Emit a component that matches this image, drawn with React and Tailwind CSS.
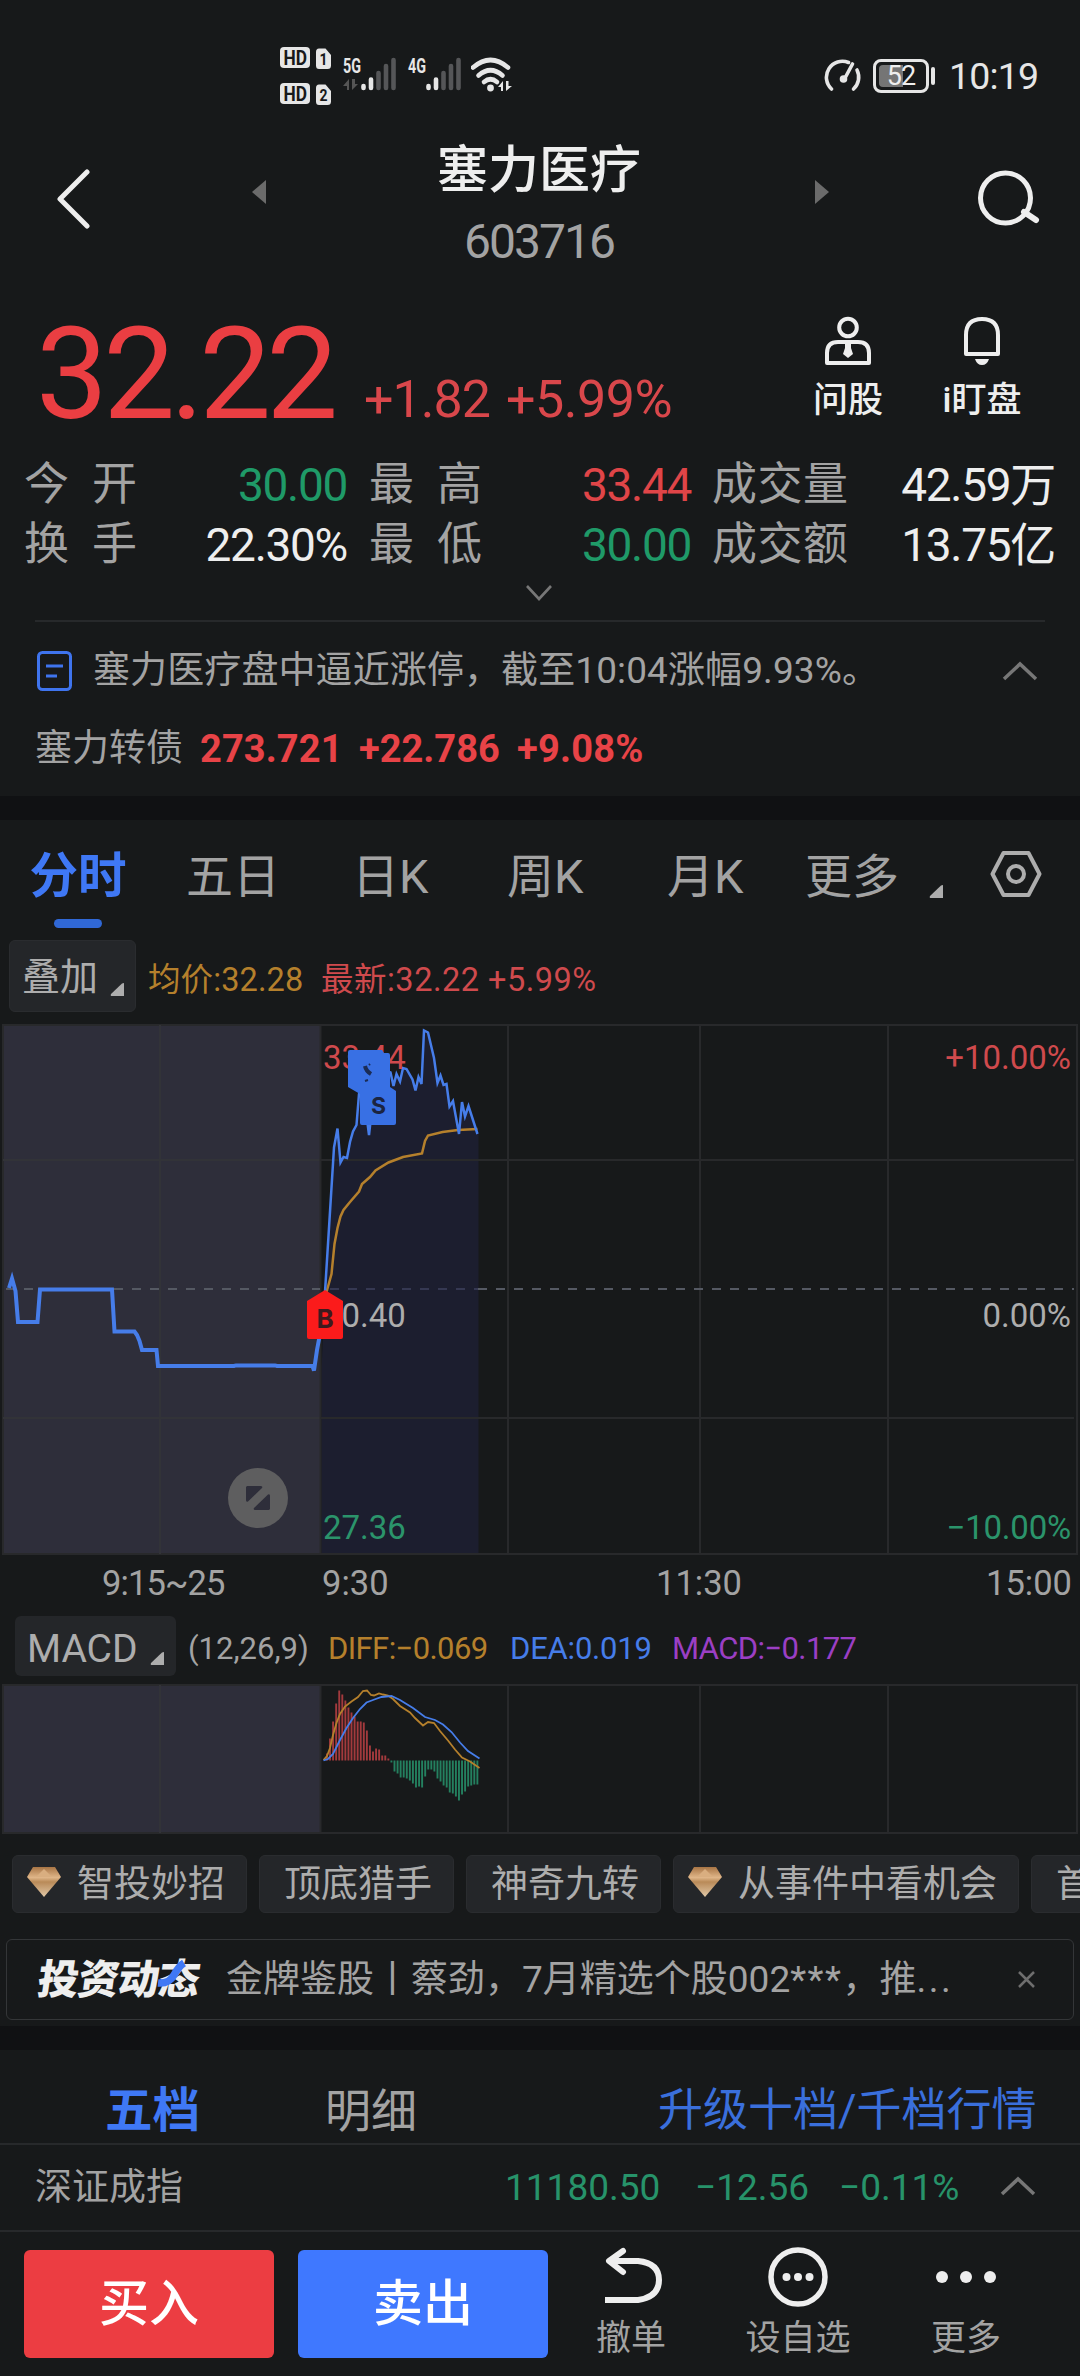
import React from "react";

const quoteRows = [
  [
    { label: ["今", "开"], value: "30.00", color: "text-[#1f9a68]" },
    { label: ["最", "高"], value: "33.44", color: "text-[#e04548]" },
    { label: ["成", "交", "量"], value: "42.59万", color: "text-[#eeeeee]" },
  ],
  [
    { label: ["换", "手"], value: "22.30%", color: "text-[#eeeeee]" },
    { label: ["最", "低"], value: "30.00", color: "text-[#1f9a68]" },
    { label: ["成", "交", "额"], value: "13.75亿", color: "text-[#eeeeee]" },
  ],
];

const quoteCols = [
  { box: "ml-[24px] w-[323px]", label: "w-[113px]" },
  { box: "ml-[22px] w-[322px]", label: "w-[113px]" },
  { box: "ml-[21px] w-[343px]", label: "w-[136px]" },
];

const periods = [
  { name: "五日", width: "ml-[59px] w-[94px]" },
  { name: "日K", width: "ml-[72px] w-[80px]" },
  { name: "周K", width: "ml-[75px] w-[80px]" },
  { name: "月K", width: "ml-[80px] w-[80px]" },
  { name: "更多", width: "ml-[58px] w-[94px]" },
];

const strategies = [
  { name: "智投妙招", width: "w-[235px]", gem: true },
  { name: "顶底猎手", width: "w-[195px]" },
  { name: "神奇九转", width: "w-[195px]" },
  { name: "从事件中看机会", width: "w-[346px]", gem: true },
  { name: "首板", width: "w-[195px]" },
];

// call auction, 9:15 - 9:25
const auctionLine =
  "9,264 12,254.5 15.5,267 18,298 37.5,298 40,265.5 112,265.5 114.5,307.5 134.5,307.5 137,311 139.5,317 142,326 156.5,326 158,342 234,342 236,341.4 275,341.4 277,342 312.5,342 314,346.5 317,326 320,310";

const priceLine =
  "325,268 334,123.5 337.5,104.5 340.5,138.5 343.5,133 347,134 350,118 353,107.5 356.5,101 359,70 363,60 366,87 369,111 371,93 378,60 386,47 390.5,48.5 393.5,62 396.5,50 400,57.5 403,44 406.5,45 412.5,55.5 415.5,66.5 418.5,53 421.5,60 424,6.5 428,8.5 434,34 437.5,59 440.5,51.5 443.5,61 446.5,60 449.5,82.5 453,77 459,110 462,78 465,92.5 468.5,82 477.5,110";

const averageLine =
  "326.5,268 331.5,250 334.5,220 337.5,204 340.5,192.5 343.5,186 350,178 359,167.5 362,160 370,153 375.5,146.5 388.5,138.5 403,133 422,129.5 425,117 428,111.5 442.5,108 458,106 477.5,105";

const macdBars = [
  7, 22, 39, 57, 70, 66, 60, 53, 48, 44, 39, 39, 38, 30, 15, 9, 12, 11, 5, 5, 2,
  -2, -11, -13, -17, -17, -18, -20, -23, -27, -26, -27, -16, -9, -9, -11, -18,
  -21, -25, -27, -32, -33, -36, -40, -34, -31, -26, -25, -24, -24,
];

const HdBadge = ({ sim }) => (
  <svg className="overflow-visible" width="52" height="23" viewBox="0 0 52 23" fontFamily="Roboto" fontWeight="700" fill="#17191a">
    <rect x="0" y="0" width="30" height="21" rx="4" fill="#e6e6e6" />
    <text x="3.5" y="17.5" fontSize="20" textLength="23.5" lengthAdjust="spacingAndGlyphs">HD</text>
    <path d="M39 1.5H45.5L51 8V18.5Q51 22 47.5 22H39Q36 22 36 18.5V5Q36 1.5 39 1.5Z" fill="#e6e6e6" />
    <text x="39.5" y="18" fontSize="17" textLength="8" lengthAdjust="spacingAndGlyphs">{sim}</text>
  </svg>
);

const Signal = ({ label, arrows }) => (
  <svg className="overflow-visible" width="54" height="35" viewBox="0 0 54 35">
    <text x="0" y="15.5" fontFamily="Roboto" fontWeight="700" fontSize="20" fill="#e6e6e6" textLength="18" lengthAdjust="spacingAndGlyphs">{label}</text>
    {arrows && (
      <path d="M6 22V33H4V29H0ZM9 22V33L15 27H12V22Z" fill="#555" />
    )}
    <g strokeWidth="4.6" strokeLinecap="round">
      <path d="M20.5 29V31M28 22.5V31" stroke="#e6e6e6" />
      <path d="M35.5 16V31M43 9V31M50.5 3V31" stroke="#555658" />
    </g>
  </svg>
);

const Corner = ({ className }) => (
  <svg className={className} width="14" height="13" viewBox="0 0 14 13">
    <path d="M14 0V13H2Q0 13 1 11L12 .6Z" fill="#adadad" />
  </svg>
);

const Gem = () => (
  <svg className="mr-[16px] mt-[-4px]" width="34" height="32" viewBox="0 0 34 32">
    <defs>
      <linearGradient id="gem" x1="0" y1="0" x2="0" y2="1">
        <stop offset="0" stopColor="#a87545" />
        <stop offset=".35" stopColor="#dfb588" />
        <stop offset=".5" stopColor="#b98a58" />
        <stop offset="1" stopColor="#e2c9a8" />
      </linearGradient>
    </defs>
    <path d="M6 1H28L34 11L17 31L0 11Z" fill="url(#gem)" />
    <path d="M9 11L17 3L25 11Z" fill="#d9ae80" />
  </svg>
);

const ChevronUp = ({ className }) => (
  <svg className={className} width="36" height="20" viewBox="0 0 36 20" fill="none">
    <path d="M2 18L18 3L34 18" stroke="#777" strokeWidth="3.5" />
  </svg>
);

const StatusBar = () => (
  <div className="flex h-[130px] items-start pl-[280px] pt-[47px]">
    <div className="flex flex-col gap-[13px]">
      <HdBadge sim="1" />
      <HdBadge sim="2" />
    </div>
    <div className="ml-[11px] mt-[10px] flex">
      <Signal label="5G" arrows />
      <div className="ml-[11px]"><Signal label="4G" /></div>
      <svg className="ml-[9px]" width="42" height="36" viewBox="0 0 42 36" fill="none" stroke="#e6e6e6" strokeWidth="4.6">
        <path d="M2 10.500Q19.500 -4.500 37 10.500" strokeLinecap="round" />
        <path d="M7.500 18.500Q19.500 8 31.500 18.500" strokeLinecap="round" />
        <path d="M13 25Q19.500 19.500 26 25" strokeLinecap="round" />
        <circle cx="19.5" cy="31" r="3.4" fill="#e6e6e6" stroke="none" />
        <path d="M32 24V34H30V30H27ZM35 24V34L41 29H37.5V24Z" fill="#e6e6e6" stroke="none" />
      </svg>
    </div>
    <svg className="ml-[311px] mt-[12px]" width="38" height="34" viewBox="0 0 38 34" fill="none" stroke="#e6e6e6" strokeWidth="3.6" strokeLinecap="round">
      <path d="M7.5 30A16 16 0 0 1 24.5 3.5" />
      <path d="M33 11A16 16 0 0 1 29.5 30" />
      <path d="M28.500 5L21 19" />
      <circle cx="19.5" cy="20" r="2" fill="#e6e6e6" />
    </svg>
    <div className="ml-[11px] mt-[12px] flex items-center">
      <div className="flex h-[34px] w-[56px] items-center justify-center rounded-[8px] border-[3px] border-[#e6e6e6] bg-[#17191a] p-[3px]">
        <div className="flex h-full w-full items-center justify-center rounded-[4px] bg-linear-to-r from-[#757575] from-55% to-[#17191a] to-55%">
          <span className="text-[27px] leading-none tracking-[-1px] text-[#eeeeee]">52</span>
        </div>
      </div>
      <div className="ml-[2px] h-[18px] w-[4px] rounded-full bg-[#e6e6e6]" />
    </div>
    <span className="ml-[14px] mt-[10px] text-[37.5px] leading-[38px] tracking-[-0.8px] text-[#e6e6e6]">10:19</span>
  </div>
);

const Header = () => (
  <div className="flex h-[150px] items-start pl-[55px]">
    <svg className="mt-[39px]" width="36" height="60" viewBox="0 0 36 60" fill="none">
      <path d="M32 3L5 30L32 57" stroke="#eeeeee" strokeWidth="5" strokeLinecap="round" strokeLinejoin="round" />
    </svg>
    <svg className="ml-[161px] mt-[50px]" width="14" height="24" viewBox="0 0 14 24">
      <path d="M14 0V24L0 12Z" fill="#6b6b6b" />
    </svg>
    <div className="flex w-[549px] flex-col items-center pt-[9px] pr-[3px]">
      <span className="text-[51px] font-medium leading-[64px] text-[#eeeeee]">塞力医疗</span>
      <span className="mt-[15px] text-[48px] leading-[48px] tracking-[-2px] text-[#a3a3a3]">603716</span>
    </div>
    <svg className="mt-[50px]" width="14" height="24" viewBox="0 0 14 24">
      <path d="M0 0V24L14 12Z" fill="#6b6b6b" />
    </svg>
    <svg className="ml-[147px] mt-[39px]" width="66" height="60" viewBox="0 0 66 60" fill="none" stroke="#eeeeee" strokeWidth="5">
      <circle cx="29.5" cy="29" r="25" />
      <path d="M48 43L60 51" strokeLinecap="round" strokeWidth="6" />
    </svg>
  </div>
);

const PricePanel = () => (
  <div className="flex h-[174px] items-start pl-[36px]">
    <span className="mt-[30px] w-[328px] whitespace-nowrap text-[128px] leading-[128px] tracking-[-4.8px] text-[#ea3e42]">32.22</span>
    <span className="mt-[94px] w-[142px] whitespace-nowrap text-[52px] leading-[52px] tracking-[-1px] text-[#d9474b]">+1.82</span>
    <span className="mt-[94px] w-[175px] whitespace-nowrap text-[52px] leading-[52px] tracking-[-0.5px] text-[#d9474b]">+5.99%</span>
    <div className="ml-[100px] mt-[36px] flex w-[134px] flex-col items-center">
      <svg width="48" height="50" viewBox="0 0 48 50" fill="none" stroke="#eeeeee" strokeWidth="4">
        <circle cx="24" cy="11.5" r="8.8" />
        <path d="M3 47V37Q3 26 14 26H34Q45 26 45 37V47Z" strokeLinejoin="round" />
        <path d="M21 28H27V32L29 38L24 42L19 38L21 32Z" fill="#eeeeee" stroke="none" />
      </svg>
      <span className="mt-[15px] text-[35px] font-medium leading-[40px] text-[#eeeeee]">问股</span>
    </div>
    <div className="mt-[36px] flex w-[134px] flex-col items-center">
      <svg width="40" height="50" viewBox="0 0 40 50" fill="none" stroke="#eeeeee" strokeWidth="4">
        <path d="M4 38V19Q4 3 20 3T36 19V38Z" strokeLinejoin="round" />
        <path d="M13 43H27Q25 49 20 49T13 43Z" fill="#eeeeee" stroke="none" />
      </svg>
      <span className="mt-[15px] text-[35px] font-medium leading-[40px] text-[#eeeeee]">i盯盘</span>
    </div>
  </div>
);

const QuoteTable = () => (
  <div className="h-[166px] pt-[1px]">
    {quoteRows.map((row, i) => (
      <div key={i} className="flex h-[60px] items-center">
        {row.map((cell, j) => (
          <div key={cell.label.join("")} className={`flex items-center justify-between ${quoteCols[j].box}`}>
            <div className={`flex justify-between text-[45px] leading-[60px] text-[#a3a3a3] ${quoteCols[j].label}`}>
              {cell.label.map((ch) => (
                <span key={ch}>{ch}</span>
              ))}
            </div>
            <span className={`text-[46px] leading-[60px] tracking-[-1.3px] ${cell.color}`}>{cell.value}</span>
          </div>
        ))}
      </div>
    ))}
    <svg className="ml-[525px] mt-[9px]" width="28" height="18" viewBox="0 0 28 18" fill="none">
      <path d="M2 2L14 15L26 2" stroke="#777" strokeWidth="2.6" />
    </svg>
  </div>
);

const NewsPanel = () => (
  <div className="h-[176px]">
    <div className="mx-[35px] h-[2px] bg-[#27292b]" />
    <div className="flex h-[98px] items-center pl-[37px]">
      <svg width="35" height="40" viewBox="0 0 35 40" fill="none" stroke="#3f74ee" strokeWidth="3">
        <rect x="1.5" y="1.5" width="32" height="37" rx="4" />
        <path d="M9 15H26M9 25H20" />
      </svg>
      <span className="ml-[21px] w-[909px] text-[37px] leading-[48px] tracking-[0.1px] text-[#a3a3a3]">塞力医疗盘中逼近涨停，截至10:04涨幅9.93%。</span>
      <ChevronUp />
    </div>
    <div className="flex h-[58px] items-center pl-[35px] text-[37px] leading-[48px]">
      <span className="w-[165px] text-[#a3a3a3]">塞力转债</span>
      <span className="w-[159px] text-[38px] font-bold tracking-[0.1px] text-[#e84347]">273.721</span>
      <span className="w-[158px] text-[38px] font-bold text-[#e84347]">+22.786</span>
      <span className="text-[38px] font-bold tracking-[0.2px] text-[#e84347]">+9.08%</span>
    </div>
  </div>
);

const PeriodTabs = () => (
  <div className="flex h-[116px] items-start pl-[29px] pt-[23px] text-[47px] leading-[68px] text-[#a3a3a3]">
    <div className="flex w-[98px] flex-col items-center">
      <span className="text-[48.5px] font-bold text-[#3f78f5]">分时</span>
      <div className="mt-[8px] h-[9px] w-[48px] rounded-full bg-[#3068d6]" />
    </div>
    {periods.map((p) => (
      <span key={p.name} className={`whitespace-nowrap ${p.width}`}>{p.name}</span>
    ))}
    <Corner className="ml-[30px] mt-[42px]" />
    <svg className="ml-[47px] mt-[7px]" width="52" height="48" viewBox="0 0 52 48" fill="none" stroke="#adadad" strokeWidth="4">
      <path d="M13.500 3H38.500L49.500 24L38.500 45H13.500L2.500 24Z" strokeLinejoin="round" />
      <circle cx="26" cy="24" r="8" />
    </svg>
  </div>
);

const TimeChart = () => (
  <div className="relative h-[531px]">
    <svg className="block" width="1080" height="531" viewBox="0 0 1080 531" fill="none">
      <rect x="3" y="1" width="317" height="529" fill="#2e2e3a" />
      <polygon points={`325,268 ${priceLine} 478.5,110 478.5,530 321.5,530 321.5,345`} fill="#1c1e2f" />
      <g stroke="#28292b" strokeWidth="2">
        <path d="M3 1H1077V530H3Z" />
        <path d="M320.5 136H1074M320.5 394H1074M508 1V530M700 1V530M888 1V530" />
        <path d="M3 136H320M3 394H320M160 1V530" stroke="#323338" />
        <path d="M320.5 1V530" />
      </g>
      <path d="M6 265H320M478 265H1074" stroke="#555963" strokeWidth="2" strokeDasharray="9 9" />
      <path d="M330 265H478" stroke="#353852" strokeWidth="2" strokeDasharray="9 9" />
      <polyline points={auctionLine} stroke="#467de9" strokeWidth="4" />
      <polyline points={averageLine} stroke="#b5802c" strokeWidth="2.5" />
      <polyline points={priceLine} stroke="#467de9" strokeWidth="2.5" />
    </svg>
    <div className="absolute left-[323px] top-[17px] text-[33px] leading-[33px] text-[#cf4a4d]">33.44</div>
    <div className="absolute left-[323px] top-[275px] text-[33px] leading-[33px] text-[#adadad]">30.40</div>
    <div className="absolute left-[323px] top-[487px] text-[33px] leading-[33px] text-[#2b946b]">27.36</div>
    <div className="absolute right-[9px] top-[17px] text-[33px] leading-[33px] text-[#cf4a4d]">+10.00%</div>
    <div className="absolute right-[9px] top-[275px] text-[33px] leading-[33px] text-[#adadad]">0.00%</div>
    <div className="absolute right-[9px] top-[487px] text-[33px] leading-[33px] tracking-[-0.2px] text-[#2b946b]">−10.00%</div>
    {/* trade markers */}
    <svg className="absolute left-[300px] top-[20px]" width="100" height="300" viewBox="0 0 100 300" fontFamily="Inter" fontWeight="700" textAnchor="middle">
      <path d="M50 6H82L84 9H88Q90 9 90 11V43L96 47V79Q96 81 94 81H62Q60 81 60 79V50L48 43V8Q48 6 50 6Z" fill="#3870e4" />
      <path d="M65 22Q66 27 71 30" stroke="#1b2c55" strokeWidth="4" fill="none" />
      <path d="M69 21L70 20M65 37L68 36" stroke="#1b2c55" strokeWidth="2" fill="none" />
      <text x="78.5" y="70" fontSize="23" fill="#1b2440">S</text>
      <path d="M25 246L43 257V293Q43 295 41 295H9Q7 295 7 293V257Z" fill="#fb1b1b" />
      <text x="25" y="284" fontSize="26" fill="#3d1a1e">B</text>
    </svg>
    <svg className="absolute left-[228px] top-[444px]" width="60" height="60" viewBox="0 0 60 60">
      <circle cx="30" cy="30" r="30" fill="#5e5e5f" />
      <path d="M19 18H33Q35 18.5 34 20L20 33.5Q18 34.5 18 32V19Z" fill="#2e2e3a" />
      <path d="M41 42H27Q25 41.5 26 40L40 26.5Q42 25.5 42 28V41Z" fill="#2e2e3a" />
    </svg>
  </div>
);

const MacdChart = () => (
  <svg className="block" width="1080" height="150" viewBox="0 0 1080 150" fill="none">
    <rect x="3" y="1" width="317" height="147" fill="#2e2e3a" />
    <g stroke="#28292b" strokeWidth="2">
      <path d="M3 1H1077V149H3Z" />
      <path d="M320.5 1V149M508 1V149M700 1V149M888 1V149" />
      <path d="M160 1V149" stroke="#323338" />
    </g>
    {macdBars.map((v, i) => (
      <rect
        key={i}
        x={326 + i * 3.07}
        y={v > 0 ? 76.5 - v : 76.5}
        width="1.9"
        height={Math.abs(v)}
        fill={v > 0 ? "#a33a3d" : "#24805f"}
      />
    ))}
    <polyline
      points="323.5,76 327,72 330,64 333,51 336.5,39 340,30 345,22.5 351.5,17.5 358,13 363,7 367,6.5 371,11 374,11.5 379,9.5 383,10.5 388,11.5 393,15 400,22 410,28.5 415,34 423,41.5 428,38 434,39 440,47 448,56.5 455,65.5 462,73.5 470,77.5 479.5,84"
      stroke="#b5802c"
      strokeWidth="1.8"
    />
    <polyline
      points="323.5,76.5 328,75 333,70 340,56 346.5,44 353,34 360,25 366.5,18.5 373,16 381.5,13 391.5,12 400,16 413,24 425,33 435,36 443,40.5 451.5,48 460,58.5 468,67 479.5,74.5"
      stroke="#467de9"
      strokeWidth="1.8"
    />
  </svg>
);

const ChartPanel = () => (
  <div className="h-[898px]">
    <div className="flex h-[88px] items-start pl-[9px] pt-[4px]">
      <div className="flex h-[72px] w-[127px] items-center rounded-[6px] border border-[#2a2c2f] bg-[#242629] pl-[12px] text-[38px] leading-[56px] text-[#adadad]">
        <span className="mt-[2px]">叠加</span>
        <Corner className="ml-[12px] mt-[26px]" />
      </div>
      <span className="ml-[12px] mt-[18px] w-[173px] whitespace-nowrap text-[32.5px] leading-[44px] tracking-[0.1px] text-[#b5802c]">均价:32.28</span>
      <span className="mt-[18px] whitespace-nowrap text-[32.5px] leading-[44px] tracking-[0.5px] text-[#cf4a4d]">最新:32.22 +5.99%</span>
    </div>
    <TimeChart />
    <div className="flex h-[61px] items-start pt-[10px] text-[34.5px] leading-[36px] text-[#a3a3a3]">
      <span className="ml-[102px] w-[220px] tracking-[-0.9px]">9:15~25</span>
      <span className="w-[334px]">9:30</span>
      <span className="w-[330px]">11:30</span>
      <span>15:00</span>
    </div>
    <div className="flex h-[68px] items-start pl-[15px] text-[31px] leading-[66px]">
      <div className="flex h-[60px] w-[161px] items-center rounded-[6px] bg-[#242629] pl-[12px] text-[39px] text-[#adadad]">
        <span className="mt-[5px]">MACD</span>
        <Corner className="ml-auto mr-[12px] mt-[24px]" />
      </div>
      <span className="ml-[12px] w-[140px] text-[#a3a3a3]">(12,26,9)</span>
      <span className="w-[182px] tracking-[-0.6px] text-[#b5802c]">DIFF:−0.069</span>
      <span className="w-[162px] tracking-[-0.2px] text-[#467de9]">DEA:0.019</span>
      <span className="tracking-[-0.6px] text-[#9b3fc4]">MACD:−0.177</span>
    </div>
    <MacdChart />
  </div>
);

const StrategyChips = () => (
  <div className="flex h-[105px] gap-[12px] overflow-hidden pl-[12px] pt-[21px]">
    {strategies.map((s) => (
      <div
        key={s.name}
        className={`flex h-[58px] shrink-0 items-center rounded-[6px] border border-[#2a2c2f] bg-[#242629] ${s.gem ? "pl-[14px]" : "pl-[24px]"} ${s.width}`}
      >
        {s.gem && <Gem />}
        <span className="mt-[2px] whitespace-nowrap text-[37px] leading-[56px] text-[#adadad]">{s.name}</span>
      </div>
    ))}
  </div>
);

const Banner = () => (
  <div className="mx-[6px] mb-[6px] flex h-[81px] items-center rounded-[6px] border-[1.5px] border-[#343638] pl-[31px]">
    <div className="relative w-[188px]">
      <span className="block skew-x-[-8deg] whitespace-nowrap text-[41px] font-black leading-[60px] tracking-[-0.8px] text-[#eeeeee]">投资动态</span>
      <svg className="absolute left-[118px] top-[10px]" width="36" height="30" viewBox="0 0 36 30" fill="none">
        <path d="M2 23Q13 24 18 15T28 3" stroke="#3f78f5" strokeWidth="7.5" />
      </svg>
    </div>
    <span className="w-[792px] whitespace-nowrap text-[37px] leading-[56px] text-[#a3a3a3]">
      金牌鉴股丨蔡劲，7月精选个股002<span className="tracking-[1.5px]">***</span>，推<span className="tracking-[2.5px]">...</span>
    </span>
    <svg width="17" height="17" viewBox="0 0 17 17" fill="none">
      <path d="M1 1L16 16M16 1L1 16" stroke="#6e6e6e" strokeWidth="2.5" />
    </svg>
  </div>
);

const OrderBookTabs = () => (
  <div className="flex h-[95px] items-start border-b-2 border-[#27292b] pl-[105px] pt-[27px] text-[46px] leading-[68px]">
    <span className="w-[220px] text-[47.5px] font-bold text-[#3f78f5]">五档</span>
    <span className="w-[333px] text-[#a3a3a3]">明细</span>
    <span className="whitespace-nowrap text-[45px] text-[#3a6fdc]">升级十档/千档行情</span>
  </div>
);

const IndexRow = () => (
  <div className="flex h-[87px] items-center border-b-2 border-[#27292b] pl-[35px] pt-[1px] text-[37px] leading-[56px]">
    <span className="w-[470px] text-[#a3a3a3]">深证成指</span>
    <span className="w-[190px] text-[#27936a]">11180.50</span>
    <span className="w-[144px] text-[#27936a]">−12.56</span>
    <span className="w-[161px] text-[#27936a]">−0.11%</span>
    <ChevronUp className="mt-[-4px]" />
  </div>
);

const ActionBar = () => (
  <div className="flex h-[144px] items-start pl-[24px]">
    <button className="mt-[18px] h-[108px] w-[250px] rounded-[6px] bg-[#ec3d42] text-[50px] font-medium leading-[60px] text-white">买入</button>
    <button className="ml-[24px] mt-[18px] h-[108px] w-[250px] rounded-[6px] bg-[#3f78ff] text-[50px] font-medium leading-[60px] text-white">卖出</button>
    <div className="flex text-[35px] leading-[44px] text-[#a3a3a3]">
      <div className="ml-[13px] flex w-[140px] flex-col items-center pt-[14px]">
        <svg className="ml-[4px]" width="62" height="62" viewBox="0 0 62 62" fill="none" stroke="#eeeeee" strokeWidth="6">
          <path d="M6 15H36Q57 17 57 34T36 54H3" />
          <path d="M21 5L7 15L21 26" strokeLinecap="round" strokeLinejoin="round" />
        </svg>
        <span className="mt-[9px]">撤单</span>
      </div>
      <div className="ml-[27px] flex w-[140px] flex-col items-center pt-[14px]">
        <svg width="62" height="62" viewBox="0 0 62 62" fill="#eeeeee">
          <circle cx="31" cy="31" r="27" fill="none" stroke="#eeeeee" strokeWidth="5.5" />
          <circle cx="19.5" cy="31" r="4" />
          <circle cx="31" cy="31" r="4" />
          <circle cx="42.5" cy="31" r="4" />
        </svg>
        <span className="mt-[9px]">设自选</span>
      </div>
      <div className="ml-[28px] flex w-[140px] flex-col items-center pt-[14px]">
        <svg width="62" height="62" viewBox="0 0 62 62" fill="#eeeeee">
          <circle cx="7" cy="31" r="6" />
          <circle cx="31" cy="31" r="6" />
          <circle cx="55" cy="31" r="6" />
        </svg>
        <span className="mt-[9px]">更多</span>
      </div>
    </div>
  </div>
);

const App = () => {
  return (
    <div className="h-[2376px] w-[1080px] overflow-hidden bg-[#17191a] font-[Roboto,'Noto_Sans_CJK_SC',sans-serif]">
      <StatusBar />
      <Header />
      <PricePanel />
      <QuoteTable />
      <NewsPanel />
      <div className="h-[24px] bg-[#101113]" />
      <PeriodTabs />
      <ChartPanel />
      <StrategyChips />
      <Banner />
      <div className="h-[24px] bg-[#101113]" />
      <OrderBookTabs />
      <IndexRow />
      <ActionBar />
    </div>
  );
};

export default App;
